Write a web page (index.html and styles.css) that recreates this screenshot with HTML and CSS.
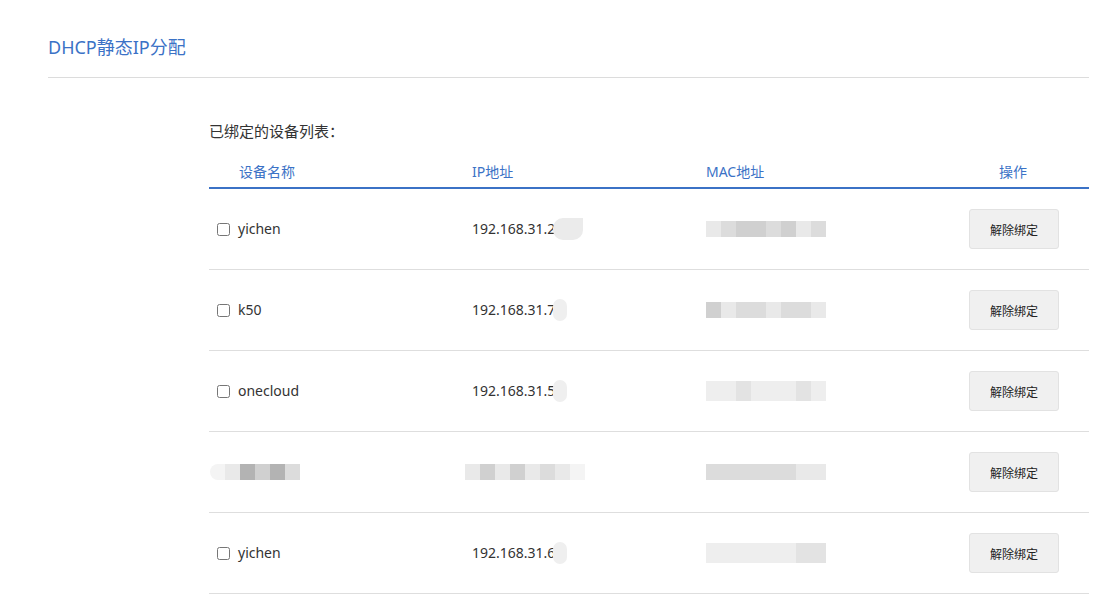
FILE: index.html
```html
<!DOCTYPE html>
<html lang="zh-CN">
<head>
<meta charset="utf-8">
<title>DHCP静态IP分配</title>
<link rel="stylesheet" href="styles.css">
</head>
<body>
<div class="page">
  <div class="title-bar"><h1 class="title">DHCP静态IP分配</h1></div>
  <div class="section">
    <div class="caption">已绑定的设备列表：</div>
    <div class="table">
      <div class="thead">
        <div class="th name-col">设备名称</div>
        <div class="th">IP地址</div>
        <div class="th">MAC地址</div>
        <div class="th op">操作</div>
      </div>

      <div class="tr">
        <div class="td name-col"><input type="checkbox" class="chk"><span>yichen</span></div>
        <div class="td"><span>192.168.31.2</span><span class="blob b-a"></span></div>
        <div class="td"><span class="mosaic"><i class="s1"></i><i class="s2"></i><i class="s3"></i><i class="s3"></i><i class="s2"></i><i class="s3"></i><i class="s1"></i><i class="s2"></i></span></div>
        <div class="td op"><button class="btn">解除绑定</button></div>
      </div>

      <div class="tr">
        <div class="td name-col"><input type="checkbox" class="chk"><span>k50</span></div>
        <div class="td"><span>192.168.31.7</span><span class="blob"></span></div>
        <div class="td"><span class="mosaic"><i class="s3"></i><i class="s1"></i><i class="s2"></i><i class="s2"></i><i class="s1"></i><i class="s2"></i><i class="s2"></i><i class="s1"></i></span></div>
        <div class="td op"><button class="btn">解除绑定</button></div>
      </div>

      <div class="tr">
        <div class="td name-col"><input type="checkbox" class="chk"><span>onecloud</span></div>
        <div class="td"><span>192.168.31.5</span><span class="blob"></span></div>
        <div class="td"><span class="mosaic light"><i class="s1"></i><i class="s1"></i><i class="s2"></i><i class="s1"></i><i class="s1"></i><i class="s1"></i><i class="s2"></i><i class="s1"></i></span></div>
        <div class="td op"><button class="btn">解除绑定</button></div>
      </div>

      <div class="tr">
        <div class="td name-col hidden-name"><span class="mosaic short"><i class="s0 round"></i><i class="s1"></i><i class="s4"></i><i class="s3"></i><i class="s4"></i><i class="s2"></i></span></div>
        <div class="td"><span class="mosaic shift"><i class="s1"></i><i class="s3"></i><i class="s1"></i><i class="s3"></i><i class="s1"></i><i class="s2"></i><i class="s1"></i><i class="s0"></i></span></div>
        <div class="td"><span class="mosaic"><i class="s2"></i><i class="s2"></i><i class="s2"></i><i class="s2"></i><i class="s2"></i><i class="s2"></i><i class="s1"></i><i class="s1"></i></span></div>
        <div class="td op"><button class="btn">解除绑定</button></div>
      </div>

      <div class="tr">
        <div class="td name-col"><input type="checkbox" class="chk"><span>yichen</span></div>
        <div class="td"><span>192.168.31.6</span><span class="blob"></span></div>
        <div class="td"><span class="mosaic light"><i class="s1"></i><i class="s1"></i><i class="s1"></i><i class="s1"></i><i class="s1"></i><i class="s1"></i><i class="s2"></i><i class="s2"></i></span></div>
        <div class="td op"><button class="btn">解除绑定</button></div>
      </div>
    </div>
  </div>
</div>
</body>
</html>
```

FILE: styles.css
```css
* { box-sizing: border-box; }
html, body { margin: 0; padding: 0; background: #fff; }
body {
  font-family: "Noto Sans", "Noto Sans CJK SC", sans-serif;
  color: #333;
}
.page { padding: 0 28px 0 48px; }
.title-bar {
  height: 78px;
  border-bottom: 1px solid #dcdcdc;
  display: flex;
  align-items: flex-start;
}
.title {
  margin: 34px 0 0 0;
  font-size: 18px;
  line-height: 26px;
  font-weight: normal;
  color: #3b72c6;
}
.section { padding-left: 161px; padding-top: 43px; }
.caption {
  font-size: 15px;
  line-height: 20px;
  color: #333;
}
.table { margin-top: 18px; }
.thead, .tr {
  display: grid;
  grid-template-columns: 263px 234px 1fr 152px;
}
.thead {
  height: 30px;
  border-bottom: 2px solid #3b72c6;
  align-items: center;
  padding-bottom: 3px;
}
.th {
  font-size: 14px;
  color: #3b72c6;
  line-height: 20px;
}
.th.name-col { padding-left: 30px; }
.th.op, .td.op { text-align: center; justify-content: center; }
.tr {
  height: 81px;
  border-bottom: 1px solid #dedede;
  align-items: center;
}
.td {
  display: flex;
  align-items: center;
  font-size: 14px;
  color: #333;
  line-height: 20px;
}
.td.name-col { padding-left: 8px; }
.chk {
  margin: 0 8px 0 0;
  width: 13px;
  height: 13px;
}
.hidden-name { padding-left: 1px !important; }
.blob {
  display: inline-block;
  width: 14px;
  height: 22px;
  background: #efefef;
  border-radius: 10px;
  margin-left: -2px;
}
.blob.b-a {
  width: 30px;
  border-radius: 10px 0 10px 10px;
  background: #ebebeb;
}
.mosaic { display: flex; height: 16px; }
.mosaic.shift { margin-left: -7px; }
.mosaic i { display: block; width: 15px; height: 100%; }
.mosaic.light { height: 20px; }
.mosaic .s0 { background: #f4f4f4; }
.mosaic .s1 { background: #e9e9e9; }
.mosaic .s2 { background: #dcdcdc; }
.mosaic .s3 { background: #d0d0d0; }
.mosaic .s4 { background: #b3b3b3; }
.mosaic.light .s1 { background: #eeeeee; }
.mosaic.light .s2 { background: #e3e3e3; }
.mosaic .round { border-radius: 8px 0 0 8px; }
.btn {
  width: 90px;
  height: 40px;
  background: #f0f0f0;
  border: 1px solid #e2e2e2;
  border-radius: 3px;
  font-family: "Noto Sans CJK SC", sans-serif;
  font-size: 12px;
  color: #222;
  padding: 0;
  margin-left: 2px;
}
```
